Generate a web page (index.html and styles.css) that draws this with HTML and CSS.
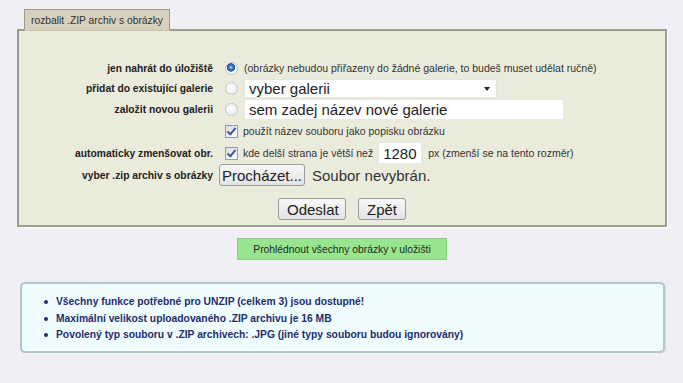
FILE: index.html
```html
<!DOCTYPE html>
<html>
<head>
	<meta charset="utf-8">
	<title>Rozbalit ZIP archiv</title>
	<link rel="stylesheet" href="styles.css">
</head>
<body>

<form class="panel">
	<div class="legend">rozbalit .ZIP archiv s obrázky</div>

	<div class="rows">
		<label class="lbl" for="r1">jen nahrát do úložiště</label>
		<div class="ctl">
			<input type="radio" name="dest" id="r1" class="radio" checked>
			<span class="note">(obrázky nebudou přiřazeny do žádné galerie, to budeš muset udělat ručně)</span>
		</div>

		<label class="lbl" for="r2">přidat do existující galerie</label>
		<div class="ctl">
			<input type="radio" name="dest" id="r2" class="radio">
			<span class="select-wrap">
				<select class="select">
					<option>vyber galerii</option>
				</select>
			</span>
		</div>

		<label class="lbl" for="r3">založit novou galerii</label>
		<div class="ctl">
			<input type="radio" name="dest" id="r3" class="radio">
			<input type="text" class="text wide" value="sem zadej název nové galerie">
		</div>

		<span class="lbl"></span>
		<div class="ctl">
			<input type="checkbox" class="check" checked>
			<span class="note">použít název souboru jako popisku obrázku</span>
		</div>

		<label class="lbl">automaticky zmenšovat obr.</label>
		<div class="ctl">
			<input type="checkbox" class="check" checked>
			<span class="note">kde delší strana je větší než</span>
			<input type="text" class="text size" value="1280">
			<span class="note">px (zmenší se na tento rozměr)</span>
		</div>

		<label class="lbl">vyber .zip archiv s obrázky</label>
		<div class="ctl">
			<button type="button" class="btn browse">Procházet...</button>
			<span class="file-name">Soubor nevybrán.</span>
		</div>
	</div>

	<div class="actions">
		<button type="submit" class="btn">Odeslat</button>
		<button type="button" class="btn">Zpět</button>
	</div>
</form>

<div class="browse-all">
	<a href="#" class="green-btn">Prohlédnout všechny obrázky v uložišti</a>
</div>

<div class="info">
	<ul>
		<li>Všechny funkce potřebné pro UNZIP (celkem 3) jsou dostupné!</li>
		<li>Maximální velikost uploadovaného .ZIP archivu je 16 MB</li>
		<li>Povolený typ souboru v .ZIP archivech: .JPG (jiné typy souboru budou ignorovány)</li>
	</ul>
</div>

</body>
</html>
```

FILE: styles.css
```css
* {
	box-sizing: border-box;
	margin: 0;
	padding: 0;
	font-family: 'Liberation Sans', Arial, sans-serif;
}
body {
	background-color: #f0eff5;
	padding: 9px 16px 0 17px;
	color: #222;
}
.panel {
	margin-top: 20px;
	background: #ebebdc;
	border: 2px solid #9a9f8e;
	box-shadow: 1px 1px 0 #fff;
	padding-bottom: 5px;
}
.legend {
	width: fit-content;
	margin: -22px 0 0 5px;
	height: 22px;
	padding: 0 6px;
	line-height: 21px;
	font-size: 10.3px;
	background: #d7d0be;
	border: 1px solid #a29a88;
	border-bottom-color: #c8c0ae;
	color: #333;
}
.rows {
	display: grid;
	grid-template-columns: 194px 1fr;
	grid-template-rows: 20px 20px 22px 22px 22px 22px;
	column-gap: 9px;
	margin-top: 27px;
}
.lbl {
	text-align: right;
	font-size: 10.3px;
	font-weight: bold;
	color: #222;
	align-self: center;
}
.ctl {
	display: flex;
	align-items: center;
}
.note {
	font-size: 10.5px;
	color: #333;
}
.radio {
	appearance: none;
	width: 13px;
	height: 13px;
	margin: 0 6px 0 3px;
	border-radius: 50%;
	border: 1px solid #c4c4c4;
	background: radial-gradient(circle at 40% 40%, #ffffff, #e6e6e6);
	flex: none;
}
.radio:checked {
	background: radial-gradient(circle at 45% 40%, #bfe0ff 0, #3a78c0 2px, #2456a0 4px, #ffffff 4.5px, #ededed 7px);
}
.check {
	appearance: none;
	width: 13px;
	height: 13px;
	margin: 0 5px 0 3px;
	border: 1px solid #8aa0b8;
	background: linear-gradient(135deg, #dcdcdc, #ffffff);
	position: relative;
	flex: none;
}
.check:checked::after {
	content: '';
	position: absolute;
	left: 3px;
	top: 0px;
	width: 3px;
	height: 7px;
	border: solid #3a5ca8;
	border-width: 0 2px 2px 0;
	transform: rotate(40deg);
}
.select-wrap {
	position: relative;
	display: inline-block;
}
.select-wrap::after {
	content: '';
	position: absolute;
	right: 7px;
	top: 8px;
	border-left: 3px solid transparent;
	border-right: 3px solid transparent;
	border-top: 4px solid #222;
	pointer-events: none;
}
.select {
	appearance: none;
	width: 253px;
	height: 19px;
	padding: 0 4px;
	font-size: 15px;
	color: #222;
	background: #fff;
	border: 1px solid #e4e4e0;
	outline: none;
}
.text {
	height: 21px;
	padding: 0 4px;
	font-size: 15px;
	color: #222;
	background: #fff;
	border: 1px solid #e8e8e4;
	outline: none;
}
.wide {
	width: 320px;
}
.size {
	width: 44px;
	height: 22px;
	margin: 0 6px 0 5px;
}
.btn {
	height: 22px;
	padding: 0 8px;
	font-size: 15px;
	color: #222;
	background: linear-gradient(#f8f8f8, #e2e2e2);
	border: 1px solid #9c9c9c;
	border-radius: 3px;
	cursor: pointer;
}
.browse {
	width: 86px;
	margin-left: -3px;
	padding: 0;
}
.file-name {
	font-size: 15px;
	margin-left: 7px;
	color: #333;
}
.actions {
	display: flex;
	justify-content: center;
	gap: 12px;
	margin-top: 12px;
}
.actions .btn:first-child {
	width: 68px;
}
.actions .btn:last-child {
	width: 48px;
}
.browse-all {
	display: flex;
	justify-content: center;
	margin-top: 11px;
}
.green-btn {
	display: block;
	width: 210px;
	height: 22px;
	line-height: 21px;
	text-align: center;
	font-size: 10.3px;
	color: #1d2b1d;
	text-decoration: none;
	background: #97e68f;
	border: 1px solid #8ccc86;
}
.info {
	margin: 22px 2px 0 3px;
	height: 71px;
	background: #effcfd;
	border: 2px solid #b3c6c8;
	border-radius: 5px;
	box-shadow: 1px 1px 2px rgba(0, 0, 0, 0.08);
	padding: 10px 0 0 22px;
}
.info ul {
	list-style: none;
}
.info li {
	font-size: 10.3px;
	font-weight: bold;
	color: #232d6e;
	line-height: 16.5px;
	display: flex;
	align-items: center;
}
.info li::before {
	content: '';
	width: 4px;
	height: 4px;
	border-radius: 50%;
	background: #232d6e;
	margin-right: 8px;
	flex: none;
}
```
